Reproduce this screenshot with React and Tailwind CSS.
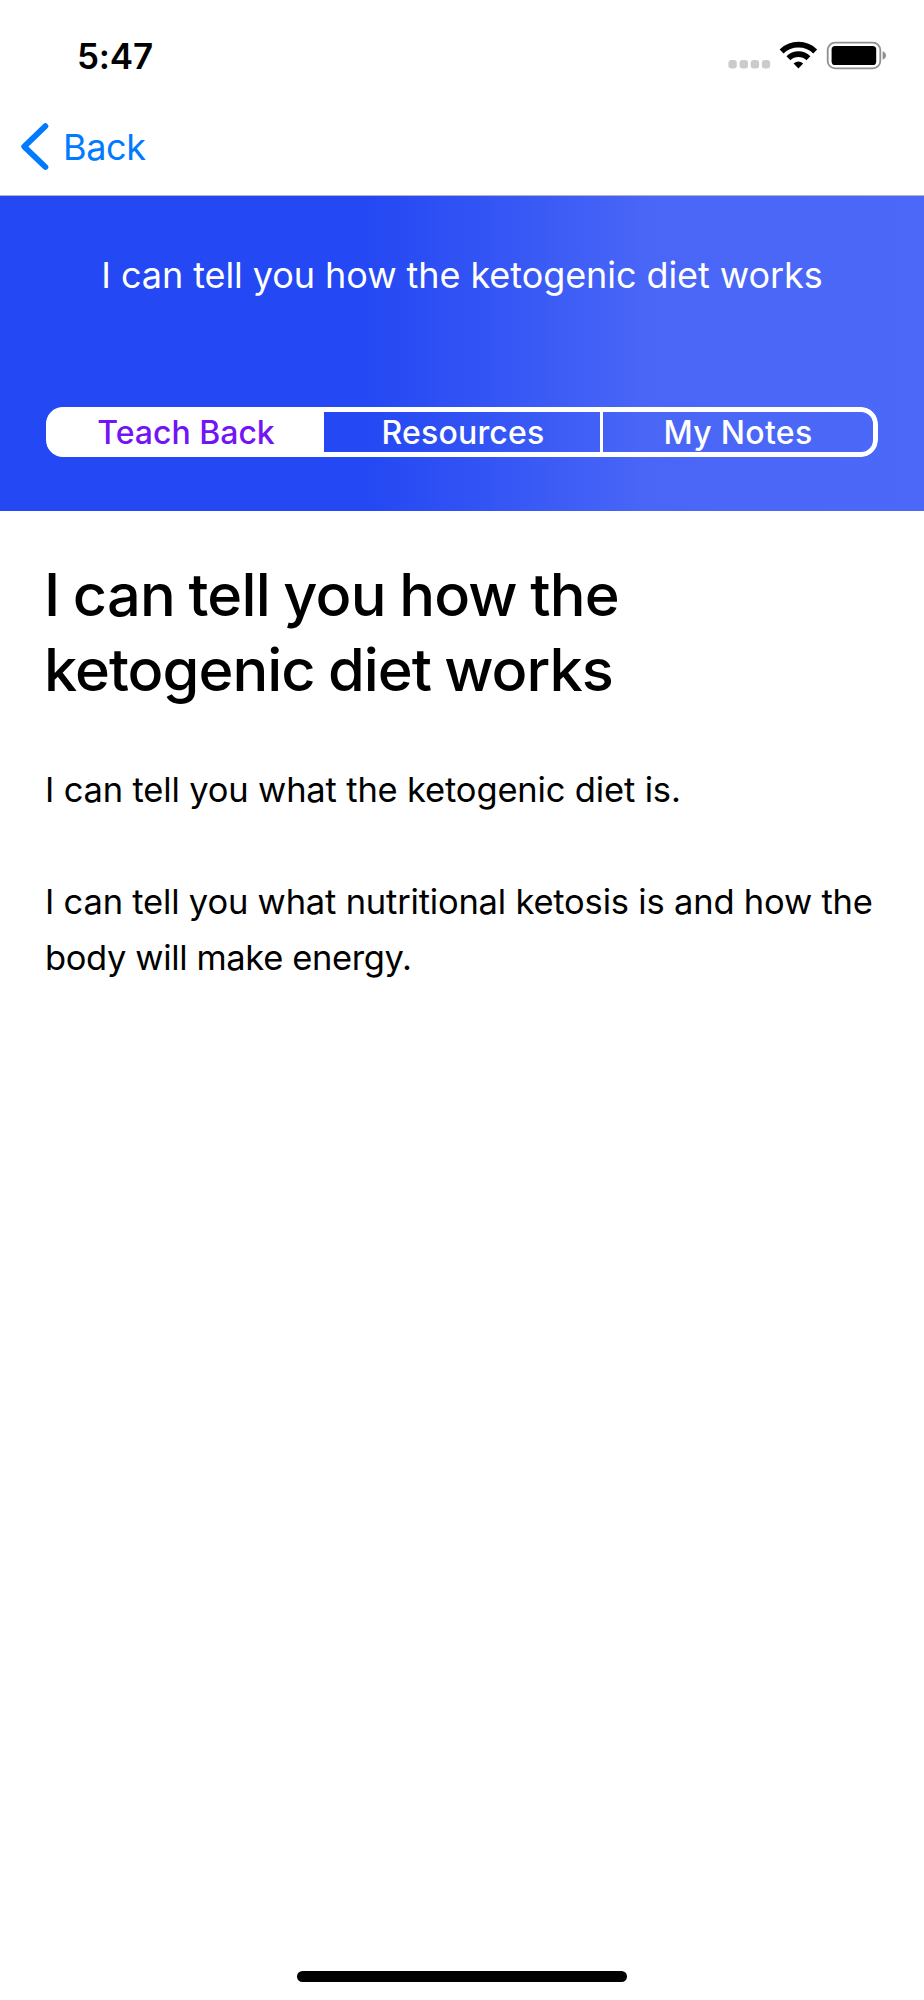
function StatusIcons() {
  return (
    <svg width="162" height="32" viewBox="0 0 162 32" className="block">
      <g fill="#cbcbcb">
        <rect x="4.4" y="20" width="8.4" height="8.4" rx="3" />
        <rect x="15.6" y="20" width="8.4" height="8.4" rx="3" />
        <rect x="26.7" y="20" width="8.4" height="8.4" rx="3" />
        <rect x="37.8" y="20" width="8.4" height="8.4" rx="3" />
      </g>
      <g fill="none" stroke="#000" strokeWidth="5.6">
        <path d="M57.6 11.4 A24.2 24.2 0 0 1 91.2 11.4" />
        <path d="M64.4 18.2 A14.4 14.4 0 0 1 84.4 18.2" />
      </g>
      <path d="M69.6 23.6 Q74.4 19.4 79.2 23.6 L74.4 28.4 Z" fill="#000" />
      <rect x="103.7" y="2.6" width="52.6" height="25.8" rx="7.5" fill="none" stroke="#8f8f8f" strokeWidth="1.8" />
      <rect x="107.6" y="6" width="44.6" height="19" rx="3.6" fill="#000" />
      <path d="M158.6 11.2 Q162 12.6 162 15.4 Q162 18.2 158.6 19.6 Z" fill="#8f8f8f" />
    </svg>
  );
}

export default function App() {
  return (
    <div className="flex h-[2000px] w-[924px] flex-col bg-white font-['Inter',sans-serif] text-black">
      <div className="flex h-[97px] shrink-0 items-start justify-between pt-[40px] pr-[38px] pl-[77px]">
        <span className="-mt-px text-[35px] leading-[35px] font-semibold tracking-[-0.2px]">5:47</span>
        <StatusIcons />
      </div>
      <div className="flex h-[99px] shrink-0 items-center border-b border-[#b4b4b8] pl-[19px] text-[#007aff]">
        <svg width="30" height="50" viewBox="0 0 30 50" className="block">
          <path d="M26.4 5.2 L5.2 25.6 L26.4 46" fill="none" stroke="currentColor" strokeWidth="5.8" strokeLinecap="round" strokeLinejoin="round" />
        </svg>
        <span className="mt-[2px] ml-[14px] text-[36px] leading-[44px] tracking-[-0.4px]">Back</span>
      </div>
      <div className="flex h-[315px] shrink-0 flex-col bg-[linear-gradient(90deg,#2448f3_0%,#2448f3_40%,#4966f7_70%,#4b68f8_100%)] px-[46px] pt-[57px] text-white">
        <div className="text-center text-[36px] leading-[44px] tracking-[-0.07px]">I can tell you how the ketogenic diet works</div>
        <div className="mt-[110px] flex h-[50px] shrink-0 overflow-hidden rounded-[17px] text-[32px] leading-[42px] font-medium">
          <div className="w-[278px] bg-white py-[5px] pl-[2px] text-center text-[#7314f5]">Teach Back</div>
          <div className="w-[276px] border-y-[5px] border-white pl-[2px] text-center tracking-[0.2px]">Resources</div>
          <div className="flex-1 rounded-r-[17px] border-y-[5px] border-r-[5px] border-l-[3px] border-white text-center tracking-[0.3px]">My Notes</div>
        </div>
      </div>
      <div className="px-[44px] pt-[46px]">
        <h1 className="text-[59.5px] leading-[75px] font-medium tracking-[-0.8px] [word-spacing:-1.6px]">
          I can tell you how the
          <br />
          <span className="tracking-[-0.98px]">ketogenic diet works</span>
        </h1>
        <div className="pl-px">
          <p className="mt-[55px] text-[34.5px] leading-[56px] tracking-[-0.16px]">I can tell you what the ketogenic diet is.</p>
          <p className="mt-[56px] text-[34.5px] leading-[56px] tracking-[-0.19px]">
            I can tell you what nutritional ketosis is and how the
            <br />
            <span className="tracking-[-0.37px]">body will make energy.</span>
          </p>
        </div>
      </div>
      <div className="mx-auto mt-auto mb-[18px] h-[11px] w-[330px] shrink-0 rounded-full bg-black" />
    </div>
  );
}
